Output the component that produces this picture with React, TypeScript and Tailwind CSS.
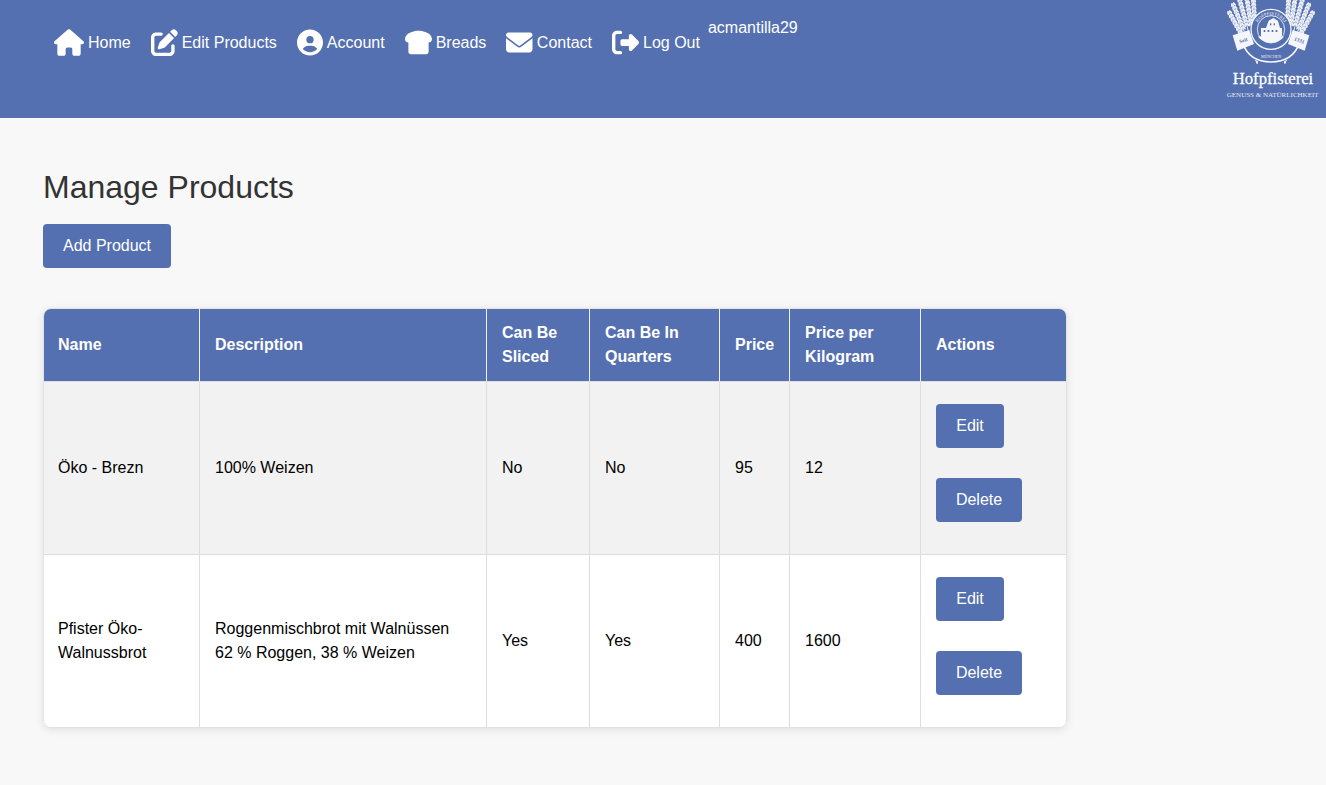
import { FaHouse, FaPenToSquare, FaCircleUser, FaBreadSlice, FaEnvelope, FaRightFromBracket } from 'react-icons/fa6';
import type { IconType } from 'react-icons';

const navItems: { label: string; icon: IconType; className: string }[] = [
  { label: 'Home', icon: FaHouse, className: 'w-[30px] h-[27px]' },
  { label: 'Edit Products', icon: FaPenToSquare, className: 'w-[27px] h-[27px]' },
  { label: 'Account', icon: FaCircleUser, className: 'w-[26px] h-[27px]' },
  { label: 'Breads', icon: FaBreadSlice, className: 'w-[27px] h-[27px]' },
  { label: 'Contact', icon: FaEnvelope, className: 'w-[26.5px] h-[27px]' },
  { label: 'Log Out', icon: FaRightFromBracket, className: 'w-[27px] h-[27px]' },
];

const headers = ['Name', 'Description', 'Can Be Sliced', 'Can Be In Quarters', 'Price', 'Price per Kilogram', 'Actions'];

const products = [
  { name: 'Öko - Brezn', description: '100% Weizen', sliced: 'No', quarters: 'No', price: '95', perKilo: '12' },
  {
    name: 'Pfister Öko-Walnussbrot',
    description: 'Roggenmischbrot mit Walnüssen 62 % Roggen, 38 % Weizen',
    sliced: 'Yes',
    quarters: 'Yes',
    price: '400',
    perKilo: '1600',
  },
];

// tips of the ears of wheat, the stalks all meet at the base point
const wheatTips = [
  [38, 34],
  [50, 10],
  [70, -4],
  [92, -8],
  [112, -2],
];

function WheatSheaf() {
  const base = [124, 190];
  return (
    <g>
      {wheatTips.map(([x, y]) => {
        const angle = (Math.atan2(base[0] - x, base[1] - y) * 180) / Math.PI;
        const length = Math.hypot(base[0] - x, base[1] - y);
        return (
          <g key={x} transform={`translate(${x} ${y}) rotate(${-angle})`}>
            <line x1="0" y1="0" x2="0" y2={length} stroke="#eef1f8" strokeWidth="3" />
            {[4, 15, 26, 37, 48, 59, 70, 81].map((d) => (
              <g key={d}>
                <ellipse cx="-4" cy={d} rx="3" ry="6.5" fill="#eef1f8" transform={`rotate(20 -4 ${d})`} />
                <ellipse cx="4" cy={d} rx="3" ry="6.5" fill="#eef1f8" transform={`rotate(-20 4 ${d})`} />
              </g>
            ))}
          </g>
        );
      })}
    </g>
  );
}

function Logo() {
  const serif = "'Liberation Serif', serif";
  return (
    <svg viewBox="0 0 330 330" className="h-[110px] w-[110px] shrink-0">
      <WheatSheaf />
      <g transform="translate(330 0) scale(-1 1)">
        <WheatSheaf />
      </g>
      {/* lower arc with the town name */}
      <path d="M72 118 Q90 190 165 190 Q240 190 258 118 Z" fill="#5470b0" />
      <path d="M80 130 Q100 186 165 186 Q230 186 250 130" fill="none" stroke="#f4f6fb" strokeWidth="5" />
      <text x="165" y="174" textAnchor="middle" fill="#eef1f8" fontSize="12" fontFamily={serif}>
        MÜNCHEN
      </text>
      {/* ribbons */}
      <path d="M50 106 L100 90 L114 132 L64 152 Z" fill="#f4f6fb" />
      <path d="M280 106 L230 90 L216 132 L266 152 Z" fill="#f4f6fb" />
      <text x="84" y="126" textAnchor="middle" fill="#5470b0" fontSize="16" fontWeight="bold" fontFamily={serif} transform="rotate(-20 84 126)">
        Seit
      </text>
      <text x="248" y="126" textAnchor="middle" fill="#5470b0" fontSize="16" fontWeight="bold" fontFamily={serif} transform="rotate(20 248 126)">
        1331
      </text>
      {/* seal */}
      <circle cx="165" cy="88" r="60" fill="#5470b0" stroke="#f4f6fb" strokeWidth="4" />
      <circle cx="165" cy="88" r="41" fill="#5470b0" stroke="#f4f6fb" strokeWidth="2.5" />
      <path id="logo-arc" d="M118 92 A47 47 0 0 1 212 92" fill="none" />
      <text fill="#f4f6fb" fontSize="14" fontFamily={serif}>
        <textPath href="#logo-arc" startOffset="50%" textAnchor="middle">
          HOFPFISTEREI
        </textPath>
      </text>
      {/* brewery house in the seal */}
      <path d="M135 108 L135 84 L150 84 L158 62 L172 54 L186 62 L192 84 L198 84 L198 108 Z" fill="#f4f6fb" />
      <path d="M126 110 Q165 102 204 110 Q190 128 165 129 Q140 128 126 110 Z" fill="#f4f6fb" />
      <g fill="#5470b0">
        <rect x="143" y="90" width="5" height="6" />
        <rect x="155" y="90" width="5" height="6" />
        <rect x="167" y="90" width="5" height="6" />
        <rect x="179" y="90" width="5" height="6" />
        <rect x="162" y="70" width="4" height="6" />
        <rect x="173" y="70" width="4" height="6" />
      </g>
      <text
        x="171"
        y="251"
        textAnchor="middle"
        fill="#ffffff"
        stroke="#ffffff"
        strokeWidth="0.8"
        fontSize="50"
        fontFamily={serif}
      >
        Hofpfisterei
      </text>
      <text x="170" y="291" textAnchor="middle" fill="#e6eaf4" fontSize="21" fontFamily={serif}>
        GENUSS &amp; NATÜRLICHKEIT
      </text>
    </svg>
  );
}

function ActionButton({ label, width }: { label: string; width: string }) {
  return (
    <button type="button" className={`h-11 rounded bg-[#5470b0] text-base text-white ${width}`}>
      {label}
    </button>
  );
}

export default function App() {
  return (
    <div className="min-h-[785px] bg-[#f8f8f8] font-['Liberation_Sans',Arial,sans-serif] text-base leading-6 text-black">
      <header className="flex h-[118px] items-start justify-between bg-[#5470b0] text-white">
        <nav className="flex items-start pl-[54px]">
          <ul className="flex gap-5 pt-[29px]">
            {navItems.map(({ label, icon: Icon, className }) => (
              <li key={label} className="flex h-[27px] items-center gap-1">
                <Icon className={className} />
                <span>{label}</span>
              </li>
            ))}
          </ul>
          <span className="ml-2 mt-4">acmantilla29</span>
        </nav>
        <Logo />
      </header>

      <main className="pl-[43px] pt-[49px]">
        <h1 className="text-[32px] leading-10 text-[#333333]">Manage Products</h1>
        <button type="button" className="mt-[17px] h-11 w-32 rounded bg-[#5470b0] text-base text-white">
          Add Product
        </button>

        <div className="mt-10 w-[1024px] overflow-hidden rounded-lg border border-[#e2e2e2] shadow-[0_2px_8px_rgba(0,0,0,0.1)]">
          <table className="w-full table-fixed border-separate border-spacing-0 text-left">
            <colgroup>
              <col className="w-[156px]" />
              <col className="w-[287px]" />
              <col className="w-[103px]" />
              <col className="w-[130px]" />
              <col className="w-[70px]" />
              <col className="w-[131px]" />
              <col />
            </colgroup>
            <thead>
              <tr className="bg-[#5470b0] text-white">
                {headers.map((h, i) => (
                  <th
                    key={h}
                    className={`h-[73px] border-b border-[#dddddd] pr-[15px] font-bold ${i === 0 ? 'pl-[14px]' : 'pl-[15px]'} ${i < 6 ? 'border-r border-r-white/90' : ''}`}
                  >
                    {h}
                  </th>
                ))}
              </tr>
            </thead>
            <tbody>
              {products.map((p, i) => {
                const rowCell = i === 0 ? 'h-[173px] border-b' : 'h-[172px]';
                return (
                  <tr key={p.name} className={i === 0 ? 'bg-[#f2f2f2]' : 'bg-white'}>
                    {[p.name, p.description, p.sliced, p.quarters, p.price, p.perKilo].map((value, j) => (
                      <td
                        key={j}
                        className={`border-r border-[#dddddd] pr-[15px] ${j === 0 ? 'pl-[14px]' : 'pl-[15px]'} ${rowCell}`}
                      >
                        {value}
                      </td>
                    ))}
                    <td className={`border-[#dddddd] px-[15px] ${rowCell}`}>
                      <div className="flex flex-col items-start gap-[30px] pb-2.5">
                        <ActionButton label="Edit" width="w-[68px]" />
                        <ActionButton label="Delete" width="w-[86px]" />
                      </div>
                    </td>
                  </tr>
                );
              })}
            </tbody>
          </table>
        </div>
      </main>
    </div>
  );
}
